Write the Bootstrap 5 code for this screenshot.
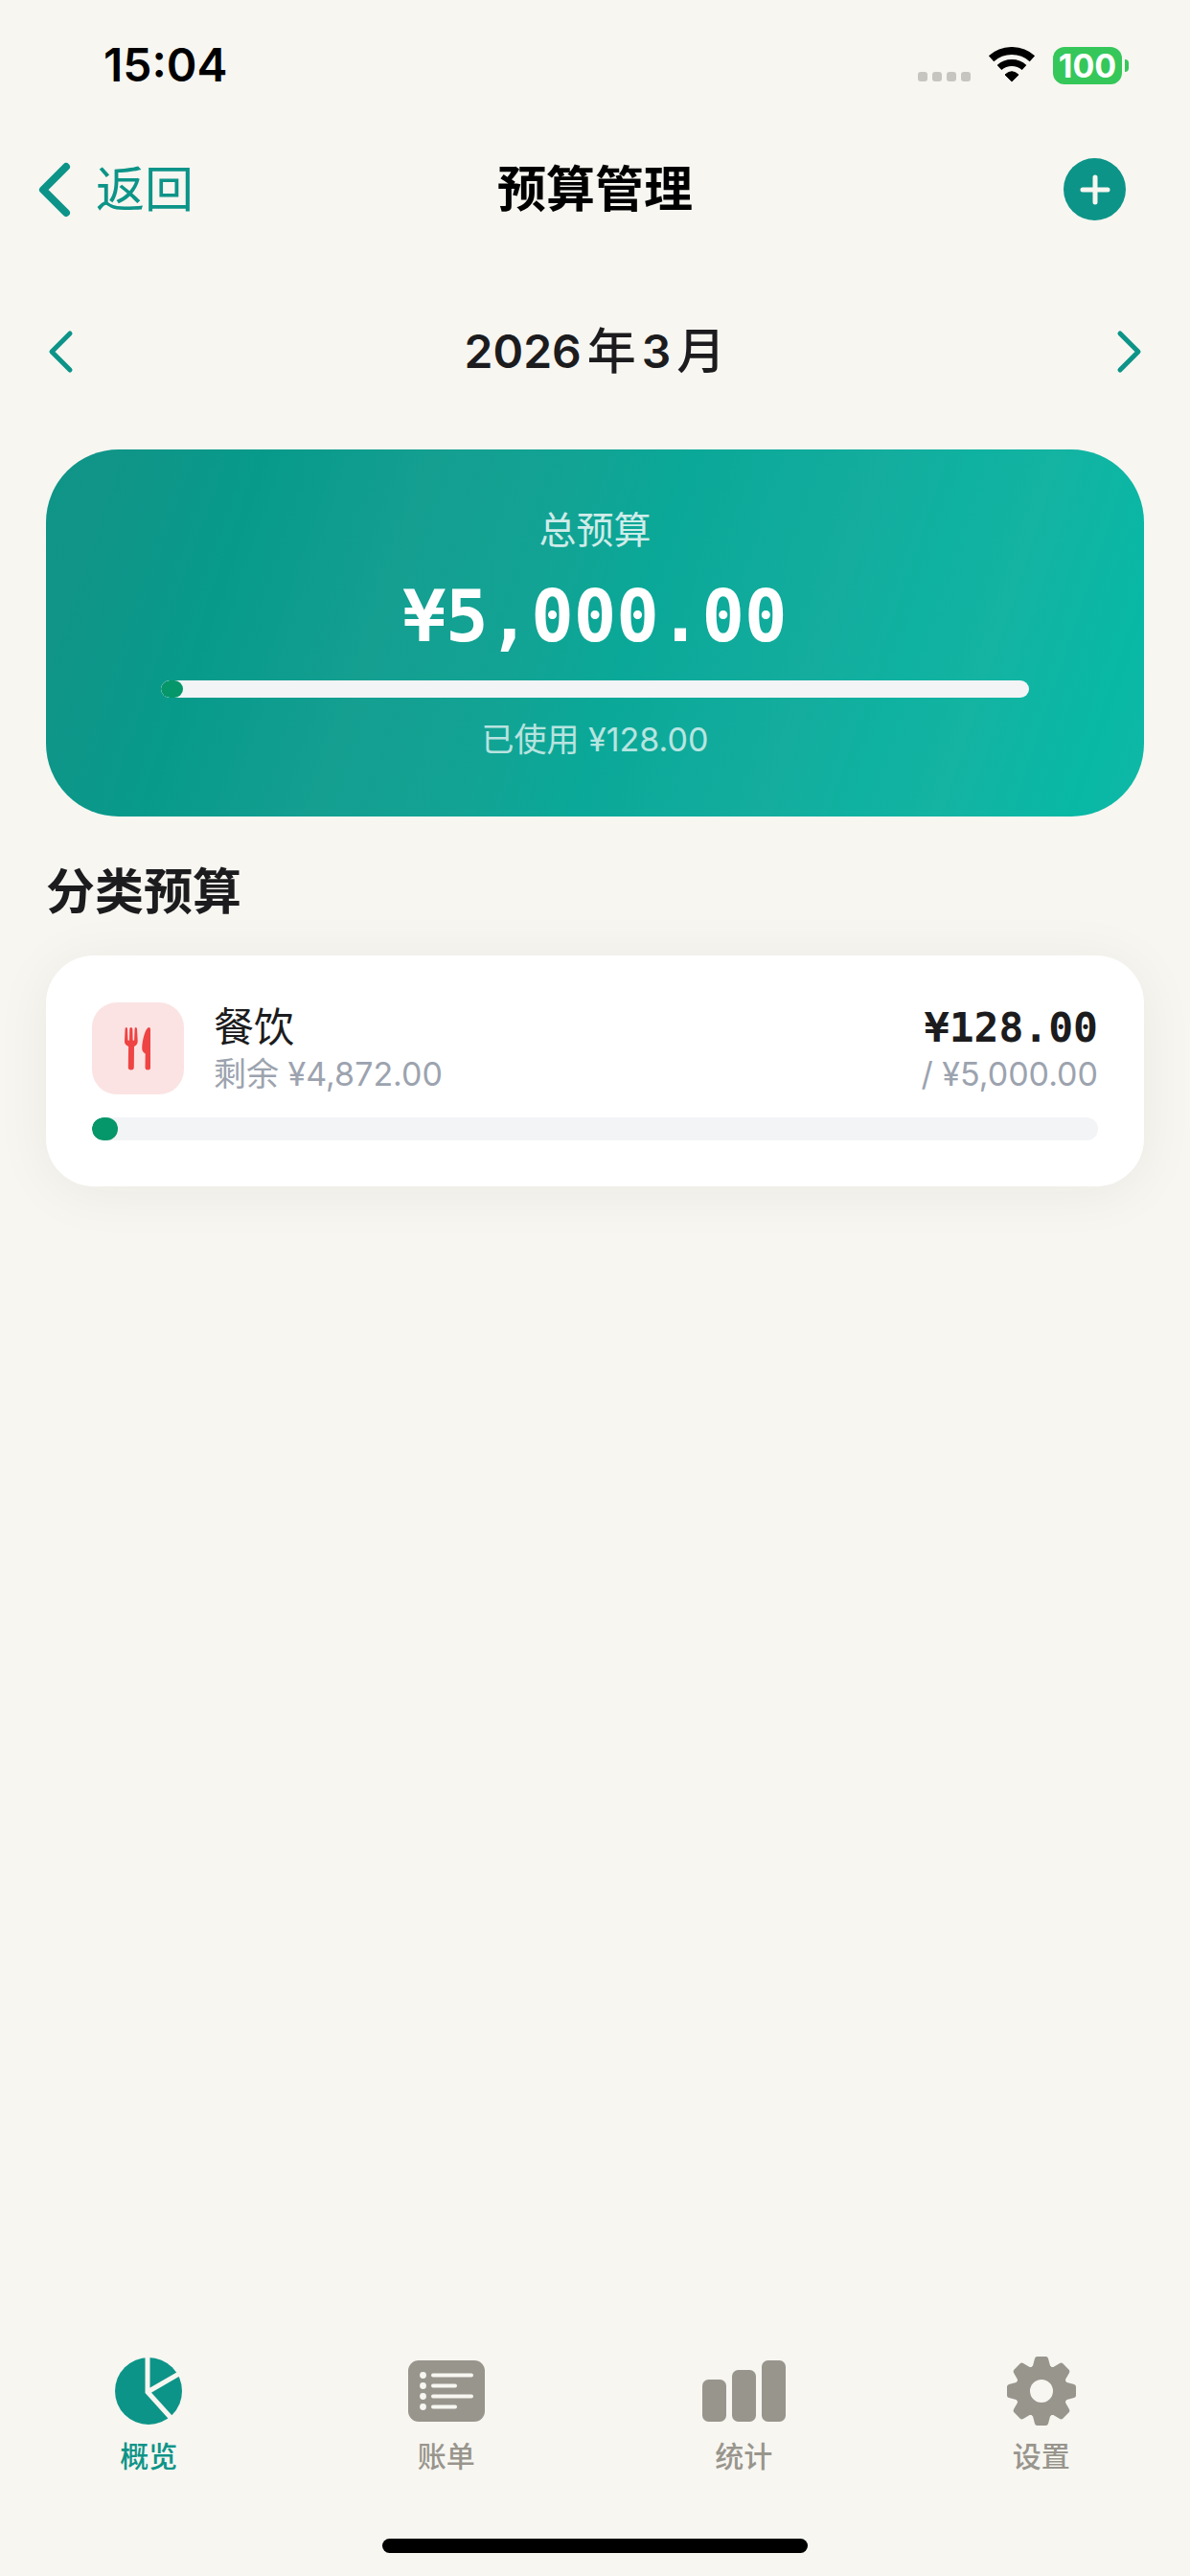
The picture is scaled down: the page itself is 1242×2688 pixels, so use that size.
<!DOCTYPE html>
<html lang="zh-CN">
<head>
<meta charset="utf-8">
<meta name="viewport" content="width=device-width, initial-scale=1">
<title>预算管理</title>
<link href="https://cdn.jsdelivr.net/npm/bootstrap@5.3.0/dist/css/bootstrap.min.css" rel="stylesheet">
<style>
  :root { --teal: #0d9488; --page: #f7f6f1; --ink: #1c1c1e; --muted: #9ca3af; --tab: #98958d; }
  body { background: var(--page); color: var(--ink); font-family: Inter, "Noto Sans CJK SC", sans-serif; }
  svg { display: block; flex: none; }
  button svg, a svg { fill: none; }

  .status-bar { height: 136px; padding: 0 64px 0 108px; color: #000; }
  .clock { font-size: 48px; font-weight: 600; line-height: 60px; }
  .signal { gap: 5px; padding-top: 24px; }
  .signal span { width: 10px; height: 10px; border-radius: 3px; background: #c6c5c0; }
  .battery { width: 72px; height: 39px; border-radius: 12px; background: #35c759; color: #fff; font-size: 34px; font-weight: 700; line-height: 39px; }
  .battery-tip { width: 4px; height: 13px; margin-left: 3px; border-radius: 0 4px 4px 0; background: #35c759; }

  .top-nav { height: 123px; font-size: 51px; line-height: 60px; }
  .nav-start { padding-left: 39px; }
  .nav-end { padding-right: 67px; }
  .back-link { gap: 25px; color: var(--teal); }
  .page-title { font-size: 51px; font-weight: 600; line-height: 60px; color: #000; }
  .add-btn { width: 65px; height: 65px; background: var(--teal); }

  .month-row { height: 204px; margin-top: 6px; padding: 0 48px; }
  .month-label { gap: 6px; font-size: 51px; font-weight: 500; line-height: 60px; }
  .month-label b { font-size: 48px; font-weight: 600; }

  .content { padding: 0 48px; }
  .total-card { padding: 60px 120px; gap: 24px; border-radius: 76px; color: #fff;
    background: linear-gradient(108.5deg, #0f9488 0%, #109588 6%, #079a8b 18%, #149f91 32%, #12a394 44%, #0aa898 53%, #14ad9e 69%, #0fb1a0 76%, #14b3a2 83%, #08b8a5 94%, #10b8a6 100%); }
  .total-name { font-size: 39px; line-height: 48px; opacity: .8; }
  .total-sum { font-family: "DejaVu Sans Mono", monospace; font-size: 74px; font-weight: 700; line-height: 85px; }
  .total-used { font-size: 34px; line-height: 40px; opacity: .7; }
  .meter { background: #f3f4f6; border-radius: 12px; overflow: hidden; }
  .meter-thin { height: 18px; border-radius: 9px; }
  .meter-thick { height: 24px; }
  .meter-fill { height: 100%; border-radius: inherit; background: #059669; }

  .section-title { margin: 49px 0 36px; font-size: 51px; font-weight: 700; line-height: 60px; }
  .item-card { padding: 48px; gap: 23px; border-radius: 50px; background: #fff; box-shadow: 0 6px 60px rgba(28, 28, 20, .06); }
  .item-row { gap: 31px; }
  .item-icon { width: 96px; height: 96px; border-radius: 26px; background: #fbe3e3; }
  .item-name { font-size: 42px; line-height: 54px; }
  .item-sum { font-family: "DejaVu Sans Mono", monospace; font-size: 43px; font-weight: 700; line-height: 54px; }
  .item-note { font-size: 34px; line-height: 44px; color: var(--muted); }

  .tab-link { gap: 14px; color: var(--tab); font-size: 30px; font-weight: 500; line-height: 36px; }
  .tab-link.active { color: var(--teal); }
  .tab-icon { height: 72px; }
  .home-bar { width: 444px; max-width: 60%; height: 15px; margin: 68px auto 24px; border-radius: 8px; background: #000; }
</style>
</head>
<body class="d-flex flex-column min-vh-100">

<div class="status-bar d-flex align-items-center justify-content-between">
  <div class="clock">15:04</div>
  <div class="d-flex align-items-center">
    <div class="signal d-flex"><span></span><span></span><span></span><span></span></div>
    <svg class="ms-3" width="54" height="38" viewBox="-3 0 54 38" fill="none" stroke="#000" aria-label="Wi-Fi">
      <path d="M2.6 12.2A32 32 0 0 1 45.4 12.2" stroke-width="8"/>
      <path d="M11 21.5A19.5 19.5 0 0 1 37 21.5" stroke-width="7"/>
      <path d="M24 36 17 29Q24 22.500 31 29Z" fill="#000" stroke-width="1"/>
    </svg>
    <div class="battery text-center ms-3">100</div>
    <div class="battery-tip"></div>
  </div>
</div>

<header class="top-nav d-flex align-items-center">
  <div class="col d-flex">
    <a href="#" class="back-link nav-start d-flex align-items-center text-decoration-none">
      <svg width="36" height="60" viewBox="0 0 36 60" stroke="#0d9488" stroke-width="8" stroke-linecap="round" stroke-linejoin="round"><path d="M30 6 6 30 30 54"/></svg>
      返回
    </a>
  </div>
  <h1 class="page-title mb-0">预算管理</h1>
  <div class="col d-flex">
    <div class="nav-end ms-auto">
      <button type="button" class="add-btn btn border-0 rounded-circle p-0 d-flex align-items-center justify-content-center" aria-label="新增预算">
        <svg width="32" height="32" viewBox="0 0 32 32" stroke="#f7f6f1" stroke-width="5" stroke-linecap="round"><path d="M16 3V29M3 16H29"/></svg>
      </button>
    </div>
  </div>
</header>

<main class="flex-grow-1">
  <div class="month-row d-flex align-items-center justify-content-between">
    <button type="button" class="btn border-0 p-0" aria-label="上个月">
      <svg width="30" height="48" viewBox="0 0 30 48" stroke="#0d9488" stroke-width="5" stroke-linecap="round" stroke-linejoin="round"><path d="M25 5 6 24 25 43"/></svg>
    </button>
    <div class="month-label d-flex"><b>2026</b><span>年</span><b>3</b><span>月</span></div>
    <button type="button" class="btn border-0 p-0" aria-label="下个月">
      <svg width="30" height="48" viewBox="0 0 30 48" stroke="#0d9488" stroke-width="5" stroke-linecap="round" stroke-linejoin="round"><path d="M5 5 24 24 5 43"/></svg>
    </button>
  </div>

  <div class="content">
    <section class="total-card d-flex flex-column text-center">
      <div class="total-name">总预算</div>
      <div class="total-sum">¥5,000.00</div>
      <div class="meter meter-thin"><div class="meter-fill" style="width:2.56%"></div></div>
      <div class="total-used">已使用 ¥128.00</div>
    </section>

    <h2 class="section-title">分类预算</h2>

    <section class="item-card d-flex flex-column">
      <div class="item-row d-flex align-items-center">
        <div class="item-icon d-flex align-items-center justify-content-center">
          <svg width="28" height="45" viewBox="0 0 28 45" fill="#ef4444">
            <path d="M.6 1.500Q.8 0 1.800 0T3 1.500L3.500 13.200Q4.200 14.500 5 13.200L5.300 1.500Q5.500 0 6.800 0T8.300 1.500L8.600 13.200Q9.400 14.500 10.100 13.200L10.600 1.500Q10.800 0 11.800 0T13 1.500L13.700 14Q14 18 10 20L9.800 42Q9.600 44.500 6.800 44.500T3.800 42L4.100 20Q-.4 18 0 14Z"/>
            <path d="M27 2V42Q27 44.500 24.300 44.500T21.500 42L21.700 27.500Q18.300 25.500 18.300 22.500C18.300 12 22.500 0 25.400 0Q27 0 27 2Z"/>
          </svg>
        </div>
        <div class="flex-grow-1">
          <div class="item-name">餐饮</div>
          <div class="item-note">剩余 ¥4,872.00</div>
        </div>
        <div class="text-end">
          <div class="item-sum">¥128.00</div>
          <div class="item-note">/ ¥5,000.00</div>
        </div>
      </div>
      <div class="meter meter-thick"><div class="meter-fill" style="width:2.56%"></div></div>
    </section>
  </div>
</main>

<footer>
  <nav class="d-flex">
    <a href="#" class="tab-link active col d-flex flex-column align-items-center text-decoration-none" aria-current="page">
      <span class="tab-icon d-flex align-items-center">
        <svg width="70" height="70" viewBox="0 0 70 70"><circle cx="35" cy="35" r="35" fill="#0d9488"/><path d="M34 -2V36L62 67M34 36 72 14" stroke="#f7f6f1" stroke-width="5"/></svg>
      </span>
      概览
    </a>
    <a href="#" class="tab-link col d-flex flex-column align-items-center text-decoration-none">
      <span class="tab-icon d-flex align-items-center">
        <svg width="80" height="64" viewBox="0 0 80 64"><rect width="80" height="64" rx="11" fill="#98958d"/>
          <g fill="#f7f6f1"><circle cx="15.500" cy="15.500" r="3.400"/><circle cx="15.500" cy="26.500" r="3.400"/><circle cx="15.500" cy="37.500" r="3.400"/><circle cx="15.500" cy="48.500" r="3.400"/></g>
          <path d="M26 15.500H66M26 26.500H49M26 37.500H66M26 48.500H49" stroke="#f7f6f1" stroke-width="4" stroke-linecap="round"/></svg>
      </span>
      账单
    </a>
    <a href="#" class="tab-link col d-flex flex-column align-items-center text-decoration-none">
      <span class="tab-icon d-flex align-items-center">
        <svg width="87" height="64" viewBox="0 0 87 64"><g fill="#98958d"><rect y="20" width="25" height="44" rx="6.500"/><rect x="31" y="10" width="25" height="54" rx="6.500"/><rect x="62" width="25" height="64" rx="6.500"/></g></svg>
      </span>
      统计
    </a>
    <a href="#" class="tab-link col d-flex flex-column align-items-center text-decoration-none">
      <span class="tab-icon d-flex align-items-center">
        <svg width="72" height="72" viewBox="-36 -36 72 72">
          <defs><path id="tooth" d="M-12.500-23-9-26.500-7-34Q-6.500-36-4.500-36H4.500Q6.500-36 7-34L9-26.500 12.500-23Z"/></defs>
          <g fill="#98958d">
            <path fill-rule="evenodd" d="M0-27A27 27 0 1 1 0 27 27 27 0 1 1 0-27ZM0-12A12 12 0 1 0 0 12 12 12 0 1 0 0-12Z"/>
            <use href="#tooth"/><use href="#tooth" transform="rotate(45)"/><use href="#tooth" transform="rotate(90)"/><use href="#tooth" transform="rotate(135)"/>
            <use href="#tooth" transform="rotate(180)"/><use href="#tooth" transform="rotate(225)"/><use href="#tooth" transform="rotate(270)"/><use href="#tooth" transform="rotate(315)"/>
          </g>
        </svg>
      </span>
      设置
    </a>
  </nav>
  <div class="home-bar"></div>
</footer>

<script src="https://cdn.jsdelivr.net/npm/bootstrap@5.3.0/dist/js/bootstrap.bundle.min.js"></script>
</body>
</html>
